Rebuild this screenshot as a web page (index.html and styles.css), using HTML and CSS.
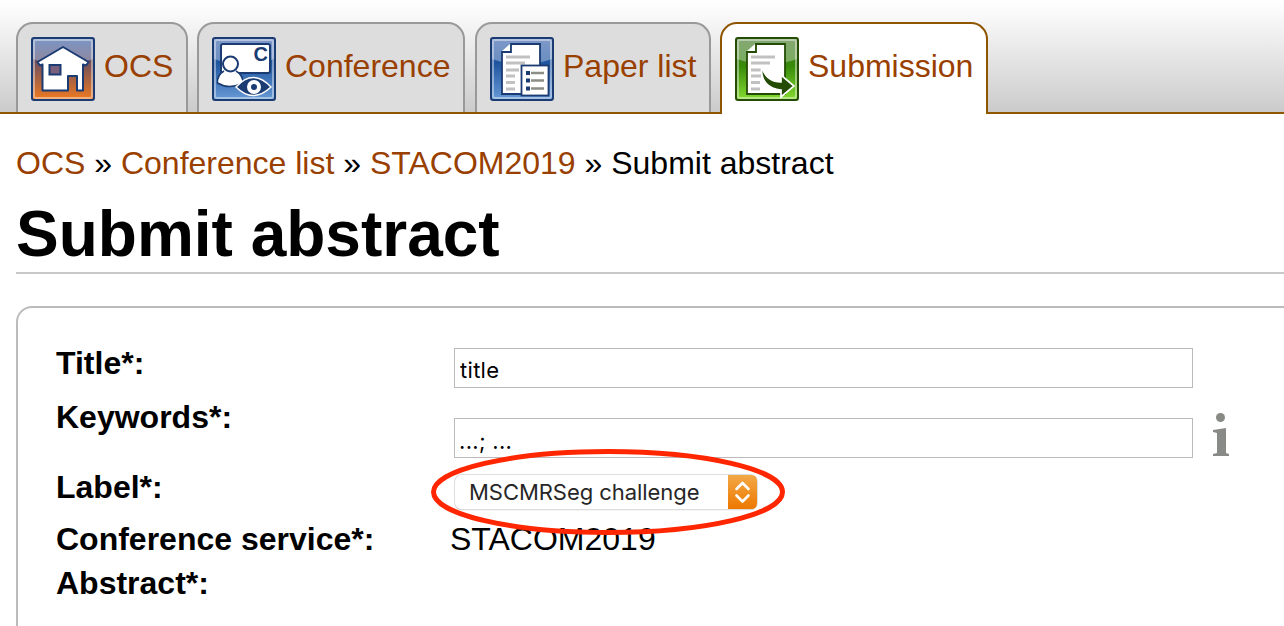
FILE: index.html
```html
<!DOCTYPE html>
<html lang="en">
<head>
<meta charset="utf-8">
<title>Submit abstract</title>
<link rel="stylesheet" href="styles.css">
</head>
<body>
<nav class="tabs">
  <a class="tab tab-home">
    <svg class="tab-icon" viewBox="0 0 64 64">
      <defs>
        <linearGradient id="home" x1="0" y1="0" x2="0" y2="1"><stop offset="0" stop-color="#4166a8"/><stop offset=".35" stop-color="#674d61"/><stop offset="1" stop-color="#f07a20"/></linearGradient>
        <linearGradient id="blue" x1="0" y1="0" x2="0" y2="1"><stop offset="0" stop-color="#4a6cae"/><stop offset=".4" stop-color="#1f559f"/><stop offset="1" stop-color="#699ad6"/></linearGradient>
        <linearGradient id="green" x1="0" y1="0" x2="0" y2="1"><stop offset="0" stop-color="#4d7a33"/><stop offset=".45" stop-color="#378a09"/><stop offset="1" stop-color="#86dc30"/></linearGradient>
      </defs>
      <rect x="1" y="1" width="62" height="62" rx="2" fill="url(#home)" stroke="#1b3b73" stroke-width="2"/>
      <path d="M2 2H62V22Q32 33 2 22Z" fill="#b4c5e4" fill-opacity=".5"/>
      <rect x="3" y="3" width="58" height="58" rx="2" fill="none" stroke="#fff" stroke-opacity=".42" stroke-width="2"/>
      <path d="M32 10L57.500 25L55 28.500L52 27.500V53.500H46V39H37V53.500H11.500V27.500L9 28.500L6.500 25Z" fill="#fff" stroke="#1b3b73" stroke-width="2" stroke-linejoin="round"/>
      <rect x="18.500" y="28" width="11" height="9.500" fill="#79617d" stroke="#1b3b73" stroke-width="2"/>
    </svg>
    <span>OCS</span>
  </a>
  <a class="tab tab-conference">
    <svg class="tab-icon" viewBox="0 0 64 64">
      <rect x="1" y="1" width="62" height="62" rx="2" fill="url(#blue)" stroke="#1b3b73" stroke-width="2"/>
      <path d="M2 2H62V22Q32 33 2 22Z" fill="#b4c5e4" fill-opacity=".5"/>
      <rect x="3" y="3" width="58" height="58" rx="2" fill="none" stroke="#fff" stroke-opacity=".42" stroke-width="2"/>
      <rect x="9" y="7" width="49" height="29" rx="2" fill="#fff" stroke="#1b3b73" stroke-width="2"/>
      <path d="M12 34Q5 38 5.500 46Q17 53 31 46Q31 38 24 34" fill="#fff" stroke="#1b3b73" stroke-width="1.500"/>
      <circle cx="18.500" cy="27" r="7.500" fill="#fff" stroke="#1b3b73" stroke-width="2"/>
      <path d="M24 50Q41 31 59 50Q41 67 24 50Z" fill="#1b3b73" stroke="#fff" stroke-width="1.500"/>
      <circle cx="42" cy="50" r="5" fill="#1b3b73" stroke="#fff" stroke-width="4"/>
      <text class="badge-letter" x="41.500" y="24">C</text>
    </svg>
    <span>Conference</span>
  </a>
  <a class="tab tab-papers">
    <svg class="tab-icon" viewBox="0 0 64 64">
      <rect x="1" y="1" width="62" height="62" rx="2" fill="url(#blue)" stroke="#1b3b73" stroke-width="2"/>
      <path d="M2 2H62V22Q32 33 2 22Z" fill="#b4c5e4" fill-opacity=".5"/>
      <rect x="3" y="3" width="58" height="58" rx="2" fill="none" stroke="#fff" stroke-opacity=".42" stroke-width="2"/>
      <path d="M21 7H50V57H12V15H21Z" fill="#fff" stroke="#1b3b73" stroke-width="1.800"/>
      <path d="M12 14L20 7V14Z" fill="#fff"/>
      <path d="M16 20H40M16 26H35M16 33H29M16 39H25M16 45.500H25M16 52H25" stroke="#c1c1c1" stroke-width="3"/>
      <rect x="31.500" y="28.500" width="27" height="30" fill="#fff" stroke="#1b3b73" stroke-width="1.800"/>
      <path d="M36 36H40M36 43.500H40M36 51.500H40" stroke="#1b3b73" stroke-width="4"/>
      <path d="M41 36H54M41 43.500H54M41 51.500H54" stroke="#8d8d87" stroke-width="2.500"/>
    </svg>
    <span>Paper list</span>
  </a>
  <a class="tab tab-submission active">
    <svg class="tab-icon" viewBox="0 0 64 64">
      <rect x="1" y="1" width="62" height="62" rx="2" fill="url(#green)" stroke="#244c04" stroke-width="2"/>
      <path d="M2 2H62V22Q32 33 2 22Z" fill="#c1d8b7" fill-opacity=".48"/>
      <rect x="3" y="3" width="58" height="58" rx="2" fill="none" stroke="#fff" stroke-opacity=".42" stroke-width="2"/>
      <path d="M21 7H50V57H12V15H21Z" fill="#fff" stroke="#244c04" stroke-width="1.800"/>
      <path d="M12 14L20 7V14Z" fill="#fff"/>
      <path d="M16 20H40M16 26H35M16 33H26M16 39H26M16 45.500H25M16 52H25" stroke="#c1c1c1" stroke-width="3"/>
      <path d="M26.500 29Q31 45 46 45V38L59 49L46 60V53Q25 51 26.500 29Z" fill="#244c04" stroke="#fff" stroke-width="1.700"/>
    </svg>
    <span>Submission</span>
  </a>
</nav>
<main class="content">
  <div class="breadcrumb"><a>OCS</a> » <a>Conference list</a> » <a>STACOM2019</a> » Submit abstract</div>
  <h1 class="heading">Submit abstract</h1>
  <form class="form">
    <div class="row row-title"><label class="label">Title*:</label><input class="input" value="title"></div>
    <div class="row row-keywords"><label class="label">Keywords*:</label><input class="input" value="...; ...">
      <svg class="info" viewBox="0 0 18 44"><circle cx="8.500" cy="4.500" r="4.500"/><path d="M1 17L14 15V40L17 41V43H1V41L5 40V20L1 19Z"/></svg>
    </div>
    <div class="row row-label"><label class="label">Label*:</label>
      <div class="select"><span class="select-text">MSCMRSeg challenge</span>
        <svg class="stepper" viewBox="0 0 29 34"><defs><linearGradient id="amber" x1="0" y1="0" x2="0" y2="1"><stop offset="0" stop-color="#f3a846"/><stop offset="1" stop-color="#ed7800"/></linearGradient></defs><path d="M0 0H23Q29 0 29 6V28Q29 34 23 34H0Z" fill="url(#amber)"/><path d="M8.500 14L14.500 8L20.500 14M8.500 20.500L14.500 26.500L20.500 20.500" fill="none" stroke="#fff" stroke-width="2.600" stroke-linecap="round" stroke-linejoin="round"/></svg>
        <svg class="highlight" viewBox="0 0 356 88"><ellipse cx="178" cy="44" rx="174.500" ry="40.500" fill="none" stroke="#ff2600" stroke-width="5"/></svg>
      </div>
    </div>
    <div class="row row-service"><span class="label">Conference service*:</span><span>STACOM2019</span></div>
    <div class="row row-abstract"><span class="label">Abstract*:</span></div>
  </form>
</main>
</body>
</html>
```
FILE: styles.css
```css
* { box-sizing: border-box; }
body {
  margin: 0;
  height: 626px;
  overflow: hidden;
  background: #fff;
  color: #000;
  font: 32px/37px "Liberation Sans", Arial, sans-serif;
}
a { color: #994000; text-decoration: none; }
.tabs {
  display: flex;
  height: 114px;
  padding: 22px 0 0 16px;
  border-bottom: 2px solid #8f5600;
  background: linear-gradient(#fff, #fafafa 12%, #cbcbcb);
}
.tab {
  display: flex;
  flex: none;
  height: 90px;
  padding: 13px 0 0 13px;
  gap: 9px;
  border: 2px solid #999;
  border-bottom: 0;
  border-radius: 17px 17px 0 0;
  background: #ddd;
  white-space: nowrap;
}
.tab span { padding-top: 11px; }
.tab-home { width: 172px; margin-right: 9px; }
.tab-conference { width: 268px; margin-right: 10px; }
.tab-papers { width: 236px; margin-right: 9px; }
.tab-submission { width: 268px; }
.tab.active { height: 92px; border-color: #8f5600; background: #fff; }
.tab-icon { width: 64px; height: 64px; flex: none; }
.badge-letter { font: bold 20px "Liberation Sans", Arial, sans-serif; fill: #1b3b73; }
.content { padding: 31px 0 0 16px; }
.breadcrumb { height: 37px; white-space: nowrap; }
.heading {
  height: 76px;
  margin: 16px 0 32px;
  border-bottom: 2px solid #c8c8c8;
  font-size: 64px;
  line-height: 73px;
}
.form {
  width: 1300px;
  height: 340px;
  padding: 37px 0 0 38px;
  border: 2px solid #bbb;
  border-radius: 16px;
}
.row { display: flex; align-items: flex-start; }
.row-title { height: 54px; }
.row-keywords { height: 70px; }
.row-label { height: 52px; }
.row-service { height: 44px; }
.label { flex: none; width: 394px; font-weight: bold; white-space: nowrap; }
.input {
  width: 739px;
  height: 40px;
  margin: 3px 0 0 4px;
  padding: 4px 5px 0;
  border: 1px solid #bbb;
  border-radius: 0;
  outline: 0;
  background: #fff;
  color: #000;
  font: 22px Inter, sans-serif;
  letter-spacing: .3px;
}
.row-keywords .input { margin-top: 19px; padding: 5px 4px 0; }
.info { width: 18px; height: 44px; margin: 14px 0 0 19px; fill: #888a85; }
.select {
  position: relative;
  display: flex;
  justify-content: space-between;
  width: 302px;
  height: 34px;
  margin: 6px 0 0 5px;
  border-radius: 7px;
  box-shadow: 0 0 0 1px #ddd, 0 1px 1px #999;
  background: #fff;
}
.select-text {
  padding-left: 14px;
  color: #262626;
  font: 22px/34px Inter, sans-serif;
  letter-spacing: -.05px;
  white-space: nowrap;
}
.stepper { width: 29px; height: 34px; }
.highlight { position: absolute; left: -25px; top: -27px; width: 356px; height: 88px; }
```
